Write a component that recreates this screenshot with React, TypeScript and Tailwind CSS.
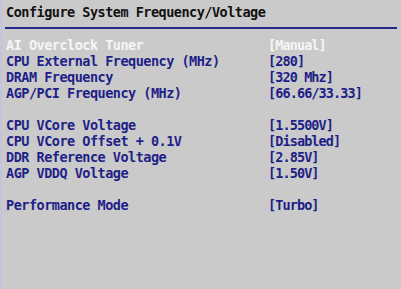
import React from 'react';

type Item = { label: string; value: string; active?: boolean } | null;

const items: Item[] = [
  { label: 'AI Overclock Tuner', value: '[Manual]', active: true },
  { label: 'CPU External Frequency (MHz)', value: '[280]' },
  { label: 'DRAM Frequency', value: '[320 Mhz]' },
  { label: 'AGP/PCI Frequency (MHz)', value: '[66.66/33.33]' },
  null,
  { label: 'CPU VCore Voltage', value: '[1.5500V]' },
  { label: 'CPU VCore Offset + 0.1V', value: '[Disabled]' },
  { label: 'DDR Reference Voltage', value: '[2.85V]' },
  { label: 'AGP VDDQ Voltage', value: '[1.50V]' },
  null,
  { label: 'Performance Mode', value: '[Turbo]' },
];

const App: React.FC = () => {
  return (
    <div
      className="w-[401px] h-[289px] overflow-hidden bg-[#cacaca] border-l-2 border-[#c4c4dc] font-bold text-[13.5px] leading-[16px] tracking-[-0.5px]"
      style={{ fontFamily: '"DejaVu Sans Mono", "Liberation Mono", monospace' }}
    >
      <div className="pt-[4px] pl-[4px] text-[#111111]">Configure System Frequency/Voltage</div>
      <div className="mt-[7px] ml-[3px] mr-[4px] h-[2px] bg-[#28288c]" />

      <div className="mt-[8px] pl-[4px]">
        {items.map((item, i) =>
          item ? (
            <div
              key={i}
              className={`grid grid-cols-[262px_1fr] h-[16px] ${item.active ? 'text-[#f6f6f6]' : 'text-[#1f1f88]'}`}
            >
              <span>{item.label}</span>
              <span className="tracking-[-0.9px]">{item.value}</span>
            </div>
          ) : (
            <div key={i} className="h-[16px]" />
          )
        )}
      </div>
    </div>
  );
};

export default App;
